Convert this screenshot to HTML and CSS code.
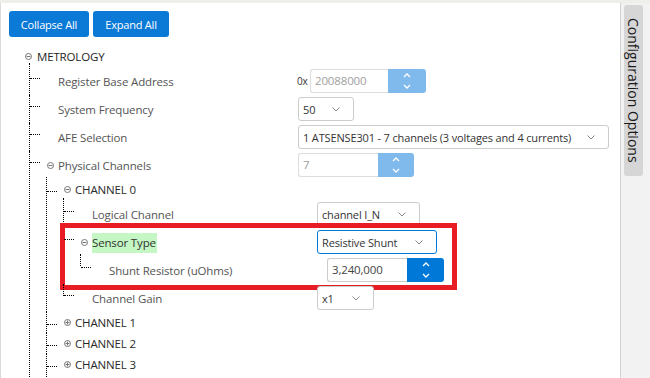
FILE: index.html
```html
<!DOCTYPE html>
<html>
    <head>
        <meta charset="utf-8">
        <title>Configuration Options</title>
        <link rel="stylesheet" href="styles.css">
    </head>
    <body>
        <div class="app">

            <!-- Arbre de configuration -->
            <div class="panel">
                <div class="toolbar">
                    <button class="btn">Collapse All</button>
                    <button class="btn">Expand All</button>
                </div>

                <div class="tree">
                    <div class="row root">
                        <span class="tog"><svg width="7" height="7" viewBox="0 0 7 7"><circle cx="3.5" cy="3.5" r="3" fill="none" stroke="#777"/><path d="M1.5 3.5h4" stroke="#777"/></svg></span>
                        <span class="name">METROLOGY</span>
                    </div>
                    <ul class="kids top">
                        <li>
                            <div class="row">
                                <span class="tog"></span>
                                <span class="lbl">Register Base Address</span>
                                <span class="hex">0x</span>
                                <div class="num">
                                    <span class="field off w78">20088000</span>
                                    <span class="spin off w38"><svg width="12" height="22" viewBox="0 0 12 22"><path d="M3 7l3-3 3 3M3 15l3 3 3-3" fill="none" stroke="#fff" stroke-width="1.3"/></svg></span>
                                </div>
                            </div>
                        </li>
                        <li>
                            <div class="row">
                                <span class="tog"></span>
                                <span class="lbl">System Frequency</span>
                                <div class="select w56"><span>50</span><svg width="8" height="5" viewBox="0 0 8 5"><path d="M0.5 0.5l3.5 3.5 3.5-3.5" fill="none" stroke="#888"/></svg></div>
                            </div>
                        </li>
                        <li>
                            <div class="row">
                                <span class="tog"></span>
                                <span class="lbl">AFE Selection</span>
                                <div class="select w311"><span>1 ATSENSE301 - 7 channels (3 voltages and 4 currents)</span><svg width="8" height="5" viewBox="0 0 8 5"><path d="M0.5 0.5l3.5 3.5 3.5-3.5" fill="none" stroke="#888"/></svg></div>
                            </div>
                        </li>
                        <li class="more">
                            <div class="row">
                                <span class="tog"><svg width="7" height="7" viewBox="0 0 7 7"><circle cx="3.5" cy="3.5" r="3" fill="none" stroke="#777"/><path d="M1.5 3.5h4" stroke="#777"/></svg></span>
                                <span class="lbl">Physical Channels</span>
                                <div class="num">
                                    <span class="field off w80">7</span>
                                    <span class="spin off w36"><svg width="12" height="22" viewBox="0 0 12 22"><path d="M3 7l3-3 3 3M3 15l3 3 3-3" fill="none" stroke="#fff" stroke-width="1.3"/></svg></span>
                                </div>
                            </div>
                            <ul class="kids">
                                <li class="grp">
                                    <div class="row">
                                        <span class="tog"><svg width="7" height="7" viewBox="0 0 7 7"><circle cx="3.5" cy="3.5" r="3" fill="none" stroke="#777"/><path d="M1.5 3.5h4" stroke="#777"/></svg></span>
                                        <span class="name">CHANNEL 0</span>
                                    </div>
                                    <ul class="kids">
                                        <li>
                                            <div class="row">
                                                <span class="tog"></span>
                                                <span class="lbl l3">Logical Channel</span>
                                                <div class="select w103"><span>channel I_N</span><svg width="8" height="5" viewBox="0 0 8 5"><path d="M0.5 0.5l3.5 3.5 3.5-3.5" fill="none" stroke="#888"/></svg></div>
                                            </div>
                                        </li>
                                        <li>
                                            <div class="row">
                                                <span class="tog"><svg width="7" height="7" viewBox="0 0 7 7"><circle cx="3.5" cy="3.5" r="3" fill="none" stroke="#777"/><path d="M1.5 3.5h4" stroke="#777"/></svg></span>
                                                <span class="lbl l3"><span class="hl">Sensor Type</span></span>
                                                <div class="select w120 focus"><span>Resistive Shunt</span><svg width="8" height="5" viewBox="0 0 8 5"><path d="M0.5 0.5l3.5 3.5 3.5-3.5" fill="none" stroke="#888"/></svg></div>
                                            </div>
                                            <ul class="kids">
                                                <li>
                                                    <div class="row">
                                                        <span class="tog"></span>
                                                        <span class="lbl l4">Shunt Resistor (uOhms)</span>
                                                        <div class="num">
                                                            <span class="field w80">3,240,000</span>
                                                            <span class="spin w37"><svg width="12" height="22" viewBox="0 0 12 22"><path d="M3 7l3-3 3 3M3 15l3 3 3-3" fill="none" stroke="#fff" stroke-width="1.3"/></svg></span>
                                                        </div>
                                                    </div>
                                                </li>
                                            </ul>
                                            <!-- encadré rouge -->
                                            <div class="mark"></div>
                                        </li>
                                        <li>
                                            <div class="row">
                                                <span class="tog"></span>
                                                <span class="lbl l3">Channel Gain</span>
                                                <div class="select w57"><span>x1</span><svg width="8" height="5" viewBox="0 0 8 5"><path d="M0.5 0.5l3.5 3.5 3.5-3.5" fill="none" stroke="#888"/></svg></div>
                                            </div>
                                        </li>
                                    </ul>
                                </li>
                                <li class="grp">
                                    <div class="row">
                                        <span class="tog"><svg width="7" height="7" viewBox="0 0 7 7"><circle cx="3.5" cy="3.5" r="3" fill="none" stroke="#777"/><path d="M1.5 3.5h4M3.5 1.5v4" stroke="#777"/></svg></span>
                                        <span class="name">CHANNEL 1</span>
                                    </div>
                                </li>
                                <li class="grp">
                                    <div class="row">
                                        <span class="tog"><svg width="7" height="7" viewBox="0 0 7 7"><circle cx="3.5" cy="3.5" r="3" fill="none" stroke="#777"/><path d="M1.5 3.5h4M3.5 1.5v4" stroke="#777"/></svg></span>
                                        <span class="name">CHANNEL 2</span>
                                    </div>
                                </li>
                                <li class="grp more">
                                    <div class="row">
                                        <span class="tog"><svg width="7" height="7" viewBox="0 0 7 7"><circle cx="3.5" cy="3.5" r="3" fill="none" stroke="#777"/><path d="M1.5 3.5h4M3.5 1.5v4" stroke="#777"/></svg></span>
                                        <span class="name">CHANNEL 3</span>
                                    </div>
                                </li>
                            </ul>
                        </li>
                    </ul>
                </div>
            </div>

            <!-- Onglet latéral -->
            <div class="side">
                <div class="tab">Configuration Options</div>
            </div>
        </div>
    </body>
</html>
```

FILE: styles.css
```css
html, body {
    margin: 0;
    height: 100%;
    overflow: hidden;
}
body {
    font-family: "Open Sans", "Noto Sans", sans-serif;
    font-size: 11.5px;
    letter-spacing: -0.15px;
    color: #333;
    background: #fff;
}
.app {
    display: flex;
    height: 100%;
    box-sizing: border-box;
    border-top: 3px solid #eeeeea;
}
.panel {
    width: 621px;
    box-sizing: border-box;
    border-left: 1px solid #dadada;
    border-right: 1px solid #d2d2d2;
    background: #fff;
    overflow: hidden;
}
.side {
    flex: 1;
    background: #f2f2f2;
    padding: 2px 0 0 3px;
}
.tab {
    width: 19px;
    height: 171px;
    box-sizing: border-box;
    background: #d6d6d6;
    border-radius: 3px;
    writing-mode: vertical-rl;
    font-size: 14px;
    letter-spacing: 0;
    color: #1a1a1a;
    line-height: 19px;
    text-align: center;
}

/* boutons */
.toolbar {
    display: flex;
    gap: 4px;
    padding: 8px 0 0 8px;
}
.btn {
    height: 26px;
    padding: 0;
    border: none;
    border-radius: 3px;
    background: #0b79d6;
    color: #fff;
    font-family: inherit;
    font-size: 11px;
    letter-spacing: -0.2px;
    white-space: nowrap;
}
.btn:first-child {
    width: 80px;
}
.btn:last-child {
    width: 76px;
}

/* arbre */
.tree {
    margin-top: 9px;
}
.row {
    display: flex;
    align-items: center;
    height: 28px;
    white-space: nowrap;
}
.grp > .row,
.root {
    height: 21px;
}
.root {
    padding-left: 23px;
}
.root .tog {
    width: 13px;
}
.tog {
    width: 12px;
    flex: none;
    display: flex;
    align-items: center;
}
.tog svg {
    margin-left: 1px;
}
.name {
    color: #2a2a2a;
}
.root .name {
    color: #1e1e1e;
}
.lbl {
    width: 240px;
    flex: none;
    color: #555;
}
.lbl.l3 {
    width: 225px;
}
.lbl.l4 {
    width: 218px;
}
.hl {
    background: #c4f7c4;
    color: #333;
    padding: 2px 1px 3px 0;
}

ul.kids {
    list-style: none;
    margin: 0;
    padding: 0;
}
ul.top {
    margin-left: 28px;
}
.kids li {
    position: relative;
    padding-left: 17px;
}
.kids li::before {
    content: "";
    position: absolute;
    left: 0;
    top: 0;
    bottom: 0;
    border-left: 1px dotted #000;
}
.kids li:first-child::before {
    top: -2px;
}
.top > li:first-child::before {
    top: -4px;
}
.kids li:last-child::before {
    bottom: auto;
    height: 12px;
}
.kids li.more::before {
    height: auto;
    bottom: -30px;
}
.kids li::after {
    content: "";
    position: absolute;
    left: 1px;
    top: 11px;
    width: 10px;
    border-top: 1px dotted #000;
}
.kids li.grp::after {
    top: 12px;
}

/* champs */
.hex {
    font-size: 10px;
    color: #333;
    width: 13px;
    margin-left: -1px;
}
.num {
    display: flex;
    height: 24px;
}
.field {
    box-sizing: border-box;
    height: 24px;
    line-height: 22px;
    padding-left: 4px;
    border: 1px solid #ccc;
    border-right: none;
    border-radius: 3px 0 0 3px;
    color: #444;
    font-size: 11.5px;
}
.field.off {
    color: #a0a0a0;
    border-color: #ddd;
}
.spin {
    display: flex;
    align-items: center;
    justify-content: center;
    height: 24px;
    background: #0078d7;
    border-radius: 0 3px 3px 0;
}
.spin.off {
    background: #80b9eb;
}
.select {
    box-sizing: border-box;
    display: flex;
    align-items: center;
    justify-content: space-between;
    height: 24px;
    padding: 0 13px 0 4px;
    border: 1px solid #ccc;
    border-radius: 3px;
    color: #333;
    font-size: 11px;
    background: #fff;
}
.select.focus {
    border-color: #0078d7;
}
.w36 { width: 36px; }
.w37 { width: 37px; }
.w38 { width: 38px; }
.w56 { width: 56px; }
.w57 { width: 57px; }
.w78 { width: 78px; }
.w80 { width: 80px; }
.w103 { width: 103px; }
.w120 { width: 120px; }
.w311 { width: 311px; }

/* encadré rouge autour du capteur */
.mark {
    position: absolute;
    left: -3px;
    top: -5px;
    width: 397px;
    height: 67px;
    box-sizing: border-box;
    border: 5px solid #e81c24;
    pointer-events: none;
}
```
